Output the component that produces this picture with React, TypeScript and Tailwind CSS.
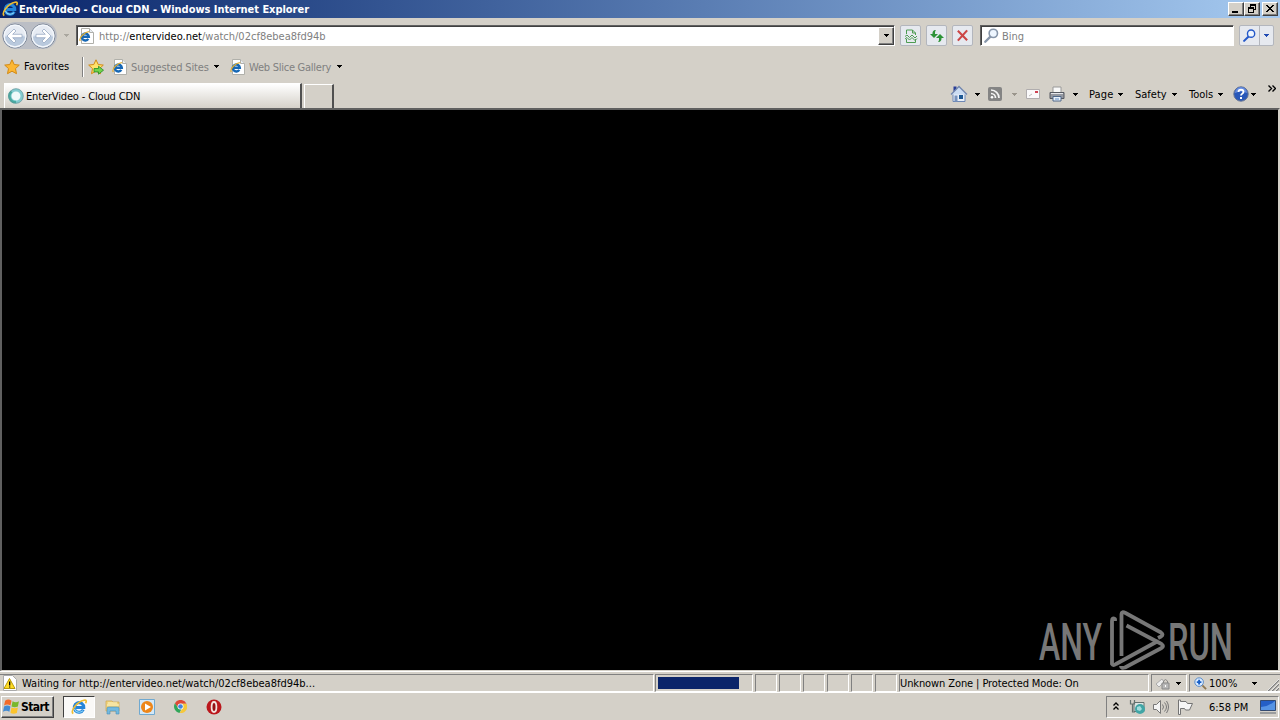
import type { ReactNode } from "react";
import clsx from "clsx";

function Caret({ className }: { className?: string }) {
  return (
    <svg viewBox="0 0 5 3" className={clsx("h-[3px] w-[5px] shrink-0", className)} shapeRendering="crispEdges">
      <path d="M0 0h5v1h-1v1h-1v1h-1v-1h-1v-1h-1z" fill="currentColor" />
    </svg>
  );
}

function ExplorerLogo({ className }: { className?: string }) {
  return (
    <svg viewBox="0 0 16 16" className={clsx("shrink-0", className)}>
      <path d="M12.300 10.600A4.800 4.800 0 1 1 12.800 8.600H5" fill="none" stroke="#2484d8" strokeWidth="3" />
      <path d="M12 11.600A5.200 5.200 0 0 1 3.400 10" fill="none" stroke="#8cd6f8" strokeWidth="1.100" />
      <path d="M2.200 14.600C-1 12 6 2.500 13 1.200c3-.4 2.500 1.600 1.500 3" fill="none" stroke="#f0bd30" strokeWidth="1.600" />
    </svg>
  );
}

function PageIcon({ className }: { className?: string }) {
  return (
    <svg viewBox="0 0 15 16" className={clsx("h-4 w-[15px] shrink-0", className)}>
      <path d="M2.500.5h8l4 4v11h-12z" fill="#fff" stroke="#b0b0aa" />
      <path d="M10.500.5v4h4" fill="#e8edf2" stroke="#b0b0ac" />
      <path d="M9.300 10.800A3.500 3.500 0 1 1 9.800 8.700H4" fill="none" stroke="#1768b5" strokeWidth="2.400" />
      <path d="M1.300 13C-.6 10.500 5 4 10.300 3.500" fill="none" stroke="#dfae35" strokeWidth="1.200" />
    </svg>
  );
}

function Star({ className, arrow }: { className?: string; arrow?: boolean }) {
  return (
    <svg viewBox="0 0 16 16" className={clsx("size-4 shrink-0", className)}>
      <path
        d="M8 .8l2.200 4.700 5.100.6-3.800 3.500 1 5.100L8 12.200l-4.500 2.500 1-5.100L.7 6.100l5.100-.6z"
        fill={arrow ? "#ffe36b" : "#fdb733"}
        stroke="#d28a16"
      />
      {arrow && <path d="M6 9.500h4.500v-2.300l5 4-5 4v-2.300H6z" fill="#71d44c" stroke="#258a26" strokeWidth=".8" />}
    </svg>
  );
}

function Magnifier({ className, color }: { className?: string; color: string }) {
  return (
    <svg viewBox="0 0 14 14" className={clsx("shrink-0", className)}>
      <path d="M6 8L1.200 12.800" stroke={color} strokeWidth="2.200" strokeLinecap="round" />
      <circle cx="8.700" cy="5" r="3.900" fill="#eef6ff" stroke={color} strokeWidth="1.500" />
    </svg>
  );
}

function NavArrow({ back }: { back?: boolean }) {
  return (
    <svg viewBox="0 0 26 26" className="size-[26px] shrink-0">
      <circle cx="13" cy="13" r="12" fill="#d7e0ed" stroke="#7d8797" />
      <path d="M2.500 13a10.500 10.500 0 0 1 21 0c-6-2-14-2-21 0z" fill="#e6ebf3" />
      <path d="M2.500 14a10.500 10.500 0 0 0 21 0c-6-2-14-2-21 0z" fill="#b9c9dd" />
      <circle cx="13" cy="13" r="10.800" fill="none" stroke="#f5f8fc" strokeWidth="1.200" />
      <path
        d={back ? "M5 13l7-7 2 2-3.300 3.300H20v3.400h-9.300L14 18l-2 2z" : "M21 13l-7-7-2 2 3.300 3.300H6v3.400h9.300L12 18l2 2z"}
        fill="#fff"
        stroke="#8fa2bd"
        strokeWidth=".7"
      />
    </svg>
  );
}

function ToolButton({ children }: { children: ReactNode }) {
  return (
    <button className="flex h-[21px] w-[21px] shrink-0 items-center justify-center rounded-[2px] border border-[#b3b6bd] bg-[#e6e9ef]">
      {children}
    </button>
  );
}

function WindowButton({ children, className }: { children: ReactNode; className?: string }) {
  return (
    <button
      className={clsx(
        "h-[14px] w-4 shrink-0 border border-t-white border-r-[#404040] border-b-[#404040] border-l-white bg-[#d4d0c8] shadow-[inset_-1px_-1px_0_#808080]",
        className
      )}
    >
      <svg viewBox="0 0 14 12" className="h-3 w-[14px]" shapeRendering="crispEdges">
        {children}
      </svg>
    </button>
  );
}

function Panel({ children, className }: { children?: ReactNode; className?: string }) {
  return (
    <div
      className={clsx(
        "flex h-[18px] shrink-0 items-center overflow-hidden border border-t-[#808080] border-r-white border-b-white border-l-[#808080]",
        className
      )}
    >
      {children}
    </div>
  );
}

function TitleBar() {
  return (
    <div className="flex h-[18px] items-center bg-linear-to-r from-[#0a246a] to-[#a6caf0]">
      <ExplorerLogo className="ml-[2px] size-4" />
      <span className="ml-px pt-px text-[11px] font-bold tracking-[-0.04px] text-white">
        EnterVideo - Cloud CDN - Windows Internet Explorer
      </span>
      <WindowButton className="ml-auto">
        <path d="M3 8h6v2H3z" />
      </WindowButton>
      <WindowButton>
        <path d="M5 1h6v6H9V6h1V3H6v1H5zM3 4h6v6H3zM4 6v3h4V6z" fillRule="evenodd" />
      </WindowButton>
      <WindowButton className="mr-[2px] ml-[2px]">
        <path d="M3 2h2v1h1v1h2V3h1V2h2v1h-1v1H9v1H8v1h1v1h1v1h1v1H9V8H8V7H6v1H5v1H3V8h1V7h1V6h1V5H5V4H4V3H3z" />
      </WindowButton>
    </div>
  );
}

function AddressRow() {
  return (
    <div className="flex h-[35px] items-center">
      <div className="ml-[2px] flex h-[27px] w-[55px] items-center gap-[2px] rounded-full bg-[#bbbec5]">
        <NavArrow back />
        <NavArrow />
      </div>
      <Caret className="ml-[6px] h-1 w-[7px] text-[#aaa79f]" />
      <div className="ml-[6px] flex h-[21px] w-[819px] shrink-0 items-center border border-t-[#606060] border-r-white border-b-white border-l-[#606060] bg-white shadow-[inset_1px_1px_0_#404040]">
        <PageIcon className="ml-[2px]" />
        <span className="ml-[5px] flex-1 pt-[2px] text-[11px] text-[#808080]">
          http://<span className="text-black">entervideo.net</span>/watch/02cf8ebea8fd94b
        </span>
        <button className="flex h-[18px] w-4 items-center justify-center border border-t-white border-r-[#404040] border-b-[#404040] border-l-white bg-[#d4d0c8] shadow-[inset_-1px_-1px_0_#808080]">
          <Caret className="h-1 w-[7px]" />
        </button>
      </div>
      <div className="ml-[5px] flex gap-[5px]">
        <ToolButton>
          <svg viewBox="0 0 14 14" className="size-[14px]" fill="none" stroke="#4e9c52">
            <path d="M2.500 5V1h6l3 3v2M8.500 1v3h3M2.500 10v3.500h9V10" />
            <path d="M1 7.500l2-1.500 2.500 2.500L8 6l3 3 2-2M1 10l2-1.500L5.500 11 8 8.500l3 3 2-2" />
          </svg>
        </ToolButton>
        <ToolButton>
          <svg viewBox="0 0 16 14" className="h-[14px] w-4" fill="#2d9337">
            <path d="M7 1C4 1 3.500 3 3.500 5H1l4 4 4-4H6c0-2 0-3 1-4z" />
            <path d="M9 13c3 0 3.500-2 3.500-4H15l-4-4-4 4h3c0 2 0 3-1 4z" />
          </svg>
        </ToolButton>
        <ToolButton>
          <svg viewBox="0 0 14 14" className="size-[13px]" stroke="#cc4545" strokeWidth="2.300">
            <path d="M2 2l10 10M12 1.500L2 12.500" />
          </svg>
        </ToolButton>
      </div>
      <div className="ml-[7px] flex h-[21px] w-[254px] shrink-0 items-center border border-t-[#606060] border-r-white border-b-white border-l-[#606060] bg-white shadow-[inset_1px_1px_0_#404040]">
        <Magnifier className="ml-[3px] size-[15px]" color="#8796aa" />
        <span className="ml-[3px] pt-[2px] text-[11px] text-[#808080]">Bing</span>
      </div>
      <div className="ml-[5px] flex h-[21px] w-[35px] shrink-0 items-center rounded-[2px] border border-[#b3b6bd] bg-[#e6e9ef] text-[#214bb3]">
        <Magnifier className="ml-[3px] size-[13px]" color="#2458c9" />
        <span className="ml-[3px] h-full w-px bg-[#b3b6bd]" />
        <Caret className="ml-1" />
      </div>
    </div>
  );
}

function FavoritesBar() {
  return (
    <div className="flex h-[27px] items-center">
      <Star className="ml-1" />
      <span className="ml-1 w-[58px] shrink-0 tracking-[0.08px]">Favorites</span>
      <span className="h-5 w-px bg-[#808080]" />
      <span className="h-5 w-px bg-white" />
      <Star className="ml-[4px]" arrow />
      <PageIcon className="ml-[8px]" />
      <span className="ml-1 w-[82px] shrink-0 pt-[2px] tracking-[-0.15px] text-[#808080]">Suggested Sites</span>
      <Caret className="ml-px" />
      <PageIcon className="ml-[11px]" />
      <span className="ml-1 w-[87px] shrink-0 pt-[2px] tracking-[-0.25px] text-[#808080]">Web Slice Gallery</span>
      <Caret className="ml-px" />
    </div>
  );
}

function TabRow() {
  return (
    <div className="flex h-7 items-start">
      <div className="mt-[3px] ml-1 flex h-[25px] w-[298px] shrink-0 items-center border-t border-r-2 border-l border-t-white border-r-[#505050] border-l-white bg-linear-to-b from-white to-[#d5d1c9]">
        <svg viewBox="0 0 16 16" className="ml-[3px] size-4">
          <circle cx="8" cy="8" r="6" fill="#eefafa" stroke="#83cbd0" strokeWidth="3" />
          <path d="M3.500 3.500A6 6 0 0 0 8 14" fill="none" stroke="#46aba2" strokeWidth="2.500" />
          <circle cx="8" cy="8" r="7.300" fill="none" stroke="#668d91" strokeWidth=".6" />
        </svg>
        <span className="ml-[2px] pt-px tracking-[-0.15px]">EnterVideo - Cloud CDN</span>
      </div>
      <div className="mt-1 ml-[2px] h-6 w-[30px] shrink-0 border-t border-r-2 border-l border-t-white border-r-[#505050] border-l-white" />
      <div className="mt-[6px] ml-auto flex h-4 items-center">
        <svg viewBox="0 0 18 18" className="size-[18px]">
          <path d="M3.500 1.500h3v6h-3z" fill="#293d98" />
          <path d="M3 8.500h12v8H3z" fill="#e8eff9" stroke="#6e88b5" />
          <path d="M1 9.500L9 1.500l8 8" fill="#cbdcf2" stroke="#7185ad" strokeWidth="1.300" />
          <path d="M4.500 10.500h3v6h-3z" fill="#7792bd" />
          <path d="M9 10h4v4H9z" fill="#1d5793" />
        </svg>
        <Caret className="ml-[7px]" />
        <svg viewBox="0 0 14 14" className="ml-[8px] size-[14px]">
          <rect width="14" height="14" rx="2" fill="#848484" />
          <g fill="none" stroke="#f5f5f5" strokeWidth="1.700">
            <path d="M3 6.500A4.500 4.500 0 0 1 7.500 11M3 3a8 8 0 0 1 8 8" />
          </g>
          <circle cx="4" cy="10.200" r="1.300" fill="#fff" />
        </svg>
        <Caret className="ml-[10px] text-[#9a958c]" />
        <svg viewBox="0 0 14 10" className="ml-[9px] h-[10px] w-[14px]">
          <path d="M.5.5h13v9H.5z" fill="#faf9fa" stroke="#b0adae" />
          <path d="M3 7l3-2" stroke="#bbb" />
          <path d="M9 2h3v2H9z" fill="#cf4252" />
        </svg>
        <svg viewBox="0 0 16 16" className="ml-[9px] size-4">
          <path d="M4 1h8v6H4z" fill="#f9f9f9" stroke="#999" />
          <path d="M1 6.500h14v6H1z" fill="#9699a1" stroke="#565961" />
          <path d="M2 7.500h12" stroke="#e6e7ea" />
          <path d="M4 10.500h8V15H4z" fill="#eaf2fc" stroke="#51698a" />
          <path d="M6 13h4" stroke="#638ec3" />
        </svg>
        <Caret className="ml-[8px]" />
        <span className="ml-[11px] w-7 shrink-0 pt-px tracking-[0.15px]">Page</span>
        <Caret className="ml-px" />
        <span className="ml-[12px] w-[36px] shrink-0 pt-px">Safety</span>
        <Caret className="ml-px" />
        <span className="ml-[12px] w-[28px] shrink-0 pt-px">Tools</span>
        <Caret className="ml-px" />
        <svg viewBox="0 0 16 16" className="ml-[10px] size-4">
          <circle cx="8" cy="8" r="7.200" fill="#2958b9" stroke="#637292" />
          <path d="M2 7a6 6 0 0 1 12 0c-4-2-8-2-12 0z" fill="#668cdf" />
          <path d="M5.500 6c0-3 5-3 5 0 0 1.500-2.500 1.800-2.500 3.500" fill="none" stroke="#fff" strokeWidth="1.800" />
          <path d="M7 11h2v2H7z" fill="#fff" />
        </svg>
        <Caret className="ml-[2px]" />
        <svg viewBox="0 0 8 7" className="mr-1 mb-3 ml-[12px] h-[7px] w-2" fill="none" stroke="#000" strokeWidth="1.400">
          <path d="M.5.5l3 3-3 3M4.500.5l3 3-3 3" />
        </svg>
      </div>
    </div>
  );
}

function Watermark() {
  return (
    <svg viewBox="0 0 192 62" className="h-[62px] w-48 overflow-visible" fill="none" stroke="#777" strokeWidth="3.800" strokeLinejoin="round">
      <g fill="#777" stroke="none" fontFamily="Roboto" fontSize="51" fontWeight="500">
        <text x="0" y="51.500" textLength="63" lengthAdjust="spacingAndGlyphs">ANY</text>
        <text x="129" y="51.500" textLength="65" lengthAdjust="spacingAndGlyphs">RUN</text>
      </g>
      <path d="M76 13v-2q-3-2-3 2v43q1 2 4 0l42-23" />
      <path d="M82.500 48V6q0-3 4-1l35.500 19.500q3 2 0 4l-3 1.500" />
      <path d="M87.500 17.500l35 18.500q3 2 0 4L86 59.500q-4 1-4-1.500" />
    </svg>
  );
}

function StatusBar() {
  return (
    <div className="flex h-[22px] items-start border-t border-b border-white pt-[2px]">
      <Panel className="w-[654px] border-l-0">
        <svg viewBox="0 0 16 16" className="ml-[2px] size-4 shrink-0">
          <path d="M1.500.5h9l4 4v11h-13z" fill="#fff" stroke="#aaa" />
          <path d="M7.500 3.500L13 13.500H2z" fill="#ffdc25" stroke="#b99a0a" />
          <path d="M7 6.500h1.300v4H7zM7 11.500h1.300v1H7z" />
        </svg>
        <span className="ml-1 pt-px">Waiting for http://entervideo.net/watch/02cf8ebea8fd94b...</span>
      </Panel>
      <Panel className="ml-px w-[98px]">
        <span className="ml-[2px] h-3 w-[81px] bg-[#0a246a]" />
      </Panel>
      <div className="ml-[2px] flex gap-[2px]">
        {[0, 1, 2, 3, 4, 5].map((slot) => (
          <Panel key={slot} className="w-[22px]" />
        ))}
      </div>
      <Panel className="ml-[2px] w-[250px]">
        <span className="pt-px tracking-[-0.1px]">Unknown Zone | Protected Mode: On</span>
      </Panel>
      <Panel className="ml-[2px] w-[36px]">
        <svg viewBox="0 0 16 14" className="ml-[3px] h-[14px] w-4">
          <path d="M1 8l6-5 2 3-5 5z" fill="#eee" stroke="#aaa" />
          <path d="M7 7h7v6H7z" fill="#b8b8b8" stroke="#888" />
          <path d="M8.500 7V5q2-3 4 0v2" fill="none" stroke="#888" />
          <path d="M10 9h1v2h-1z" fill="#fff" />
        </svg>
        <Caret className="ml-[5px]" />
      </Panel>
      <Panel className="ml-[2px] flex-1 border-r-0">
        <svg viewBox="0 0 14 14" className="ml-1 size-[13px] shrink-0">
          <path d="M9 9l4 4" stroke="#8f7751" strokeWidth="2" />
          <circle cx="5.500" cy="5.500" r="4.600" fill="#dcecff" stroke="#4d83c5" />
          <path d="M5.500 3v5M3 5.500h5" stroke="#185fc7" strokeWidth="2" />
        </svg>
        <span className="ml-[2px] w-[31px] shrink-0 pt-px">100%</span>
        <Caret className="ml-3" />
        <svg viewBox="0 0 13 14" className="mt-[3px] ml-[9px] h-[14px] w-[13px] shrink-0" fill="none">
          <path d="M1 14L13 2M5 14l8-8M9 14l4-4" stroke="#808080" strokeWidth="1.500" />
          <path d="M0 14L13 1M4 14l9-9M8 14l5-5" stroke="#fff" strokeWidth=".7" />
        </svg>
      </Panel>
    </div>
  );
}

function Taskbar() {
  return (
    <div className="flex h-[27px] items-center">
      <button className="ml-px flex h-[22px] w-[53px] items-center border border-t-white border-r-[#404040] border-b-[#404040] border-l-white shadow-[inset_-1px_-1px_0_#808080]">
        <svg viewBox="0 0 16 16" className="ml-px size-[17px] shrink-0">
          <path d="M2 2.500q3-2 6 0L7 7q-3-2-6 0z" fill="#f36b2a" />
          <path d="M9 3q3 2 6 0l-1 5q-3 1.500-6 0z" fill="#79b82c" />
          <path d="M1 8q3-2 6 0l-1 5q-3-2-6 0z" fill="#438bd3" />
          <path d="M8 9q3 1.500 6 0l-1 5q-3 1.500-6 0z" fill="#fcc42d" />
        </svg>
        <span className="ml-px text-[12px] font-bold tracking-[-0.6px]">Start</span>
      </button>
      <div className="ml-[9px] flex h-[22px] w-8 items-center justify-center border border-t-[#404040] border-r-white border-b-white border-l-[#404040] bg-[#faf9f7]">
        <ExplorerLogo className="size-4" />
      </div>
      <svg viewBox="0 0 16 16" className="ml-[10px] size-4">
        <path d="M1 2h6l1 1h6v9H1z" fill="#efd480" stroke="#d0a64c" strokeWidth=".7" />
        <path d="M3 4h9M2 6h12" stroke="#fff5c4" />
        <path d="M2 15V9q0-1 2-1h8q2 0 2 1v6h-3v-3H5v3z" fill="#73b9df" stroke="#478eb9" strokeWidth=".6" />
      </svg>
      <svg viewBox="0 0 16 16" className="ml-[18px] size-4">
        <path d="M.5.5h15v15H.5z" fill="#d3e8f8" stroke="#70a9d0" />
        <circle cx="8" cy="8" r="6" fill="#ed861a" />
        <path d="M6 4.500l6 3.500-6 3.500z" fill="#fff" />
      </svg>
      <svg viewBox="0 0 14 14" className="ml-[19px] size-[13px]">
        <path d="M1 3.500A7 7 0 0 1 13.500 4H7L4 8z" fill="#df4937" />
        <path d="M1 3.500l3.500 5 3.500 1L6 14A7 7 0 0 1 1 3.500z" fill="#31a65a" />
        <path d="M8 4h5.500A7 7 0 0 1 6 14l4-6z" fill="#f6c83a" />
        <circle cx="7" cy="7" r="3.200" fill="#fff" />
        <circle cx="7" cy="7" r="2.500" fill="#4284df" />
      </svg>
      <svg viewBox="0 0 16 16" className="ml-[19px] size-4">
        <circle cx="8" cy="8" r="7.500" fill="#bb171c" />
        <ellipse cx="8" cy="8" rx="2.400" ry="5" fill="#941014" stroke="#f2e3df" strokeWidth="1.800" />
      </svg>
      <Panel className="mr-px ml-auto h-[22px] w-[173px]">
        <svg viewBox="0 0 6 9" className="ml-[6px] h-[9px] w-[6px]" fill="none" stroke="#000" strokeWidth="1.300">
          <path d="M.5 3.500L3 1l2.500 2.500M.5 7.500L3 5l2.500 2.500" />
        </svg>
        <svg viewBox="0 0 16 16" className="ml-[10px] size-4 shrink-0">
          <path d="M5 3.500h10v9H5z" fill="#dce6e4" stroke="#64716f" />
          <path d="M1.500 1v4h4V1M3.500 5v8H6" fill="none" stroke="#64716f" strokeWidth="1.200" />
          <circle cx="11" cy="10" r="5" fill="#41a5a5" />
          <path d="M8 8l3-1 2 3-2 2-3-1z" fill="#a3dddd" />
        </svg>
        <svg viewBox="0 0 16 14" className="ml-[8px] h-[14px] w-4 shrink-0" fill="none" stroke="#777">
          <path d="M.5 4.500h3l4-4v13l-4-4h-3z" fill="#f4f4f4" />
          <path d="M9.500 4.500q2 2.500 0 5M11.500 2.500q4 4.500 0 9M13.500 1q4 6 0 12" />
        </svg>
        <svg viewBox="0 0 16 16" className="ml-[8px] size-4 shrink-0" fill="#f5f5f5" stroke="#737373">
          <path d="M1.500 1v14.500h2V9.500h4l1 1.500h4l3-6.500h-5l-1.500-2H3.500V1z" />
        </svg>
        <span className="ml-4 w-[40px] shrink-0 pt-[2px] text-[11px] tracking-[-0.1px]">6:58 PM</span>
        <svg viewBox="0 0 16 14" className="ml-[11px] h-[14px] w-4 shrink-0">
          <path d="M.5.5h15v10H.5z" fill="#245fc6" stroke="#344b71" />
          <path d="M1 7Q8 7 15 1v9H1z" fill="#5694e4" />
          <path d="M0 13h16" stroke="#898c91" strokeWidth="1.500" />
        </svg>
      </Panel>
    </div>
  );
}

export default function App() {
  return (
    <div className="flex h-[720px] w-[1280px] flex-col overflow-hidden bg-[#d4d0c8] font-['DejaVu_Sans_Condensed','DejaVu_Sans',sans-serif] text-[11px] leading-[14px] whitespace-nowrap text-black">
      <TitleBar />
      <AddressRow />
      <FavoritesBar />
      <TabRow />
      <main className="flex h-[563px] items-end justify-end border-x-2 border-t-2 border-b border-t-[#606060] border-r-[#d4d0c8] border-b-[#d4d0c8] border-l-[#606060] bg-black pr-[47px]">
        <Watermark />
      </main>
      <StatusBar />
      <Taskbar />
    </div>
  );
}
